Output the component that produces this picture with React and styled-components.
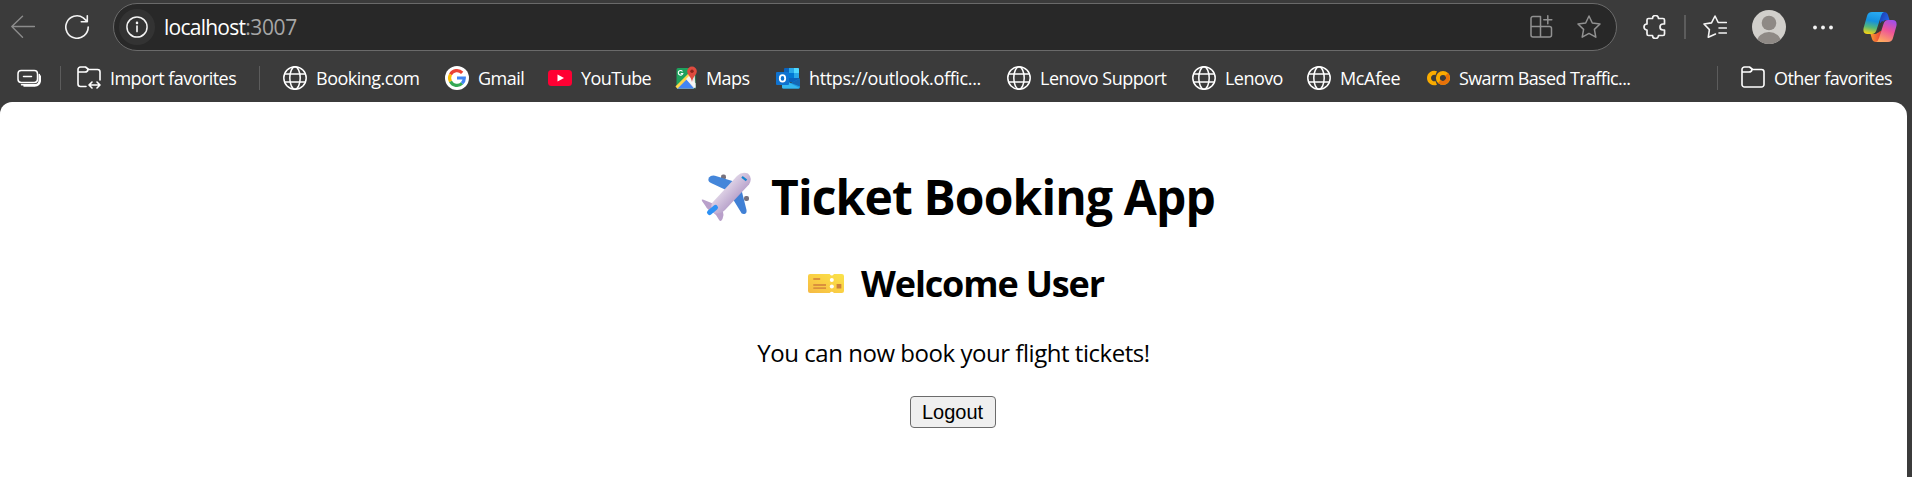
import React from "react";
import styled, { createGlobalStyle } from "styled-components";

const UI_FONT = '"Open Sans", "Noto Sans", sans-serif';

const GlobalStyle = createGlobalStyle`
  *, *::before, *::after { box-sizing: border-box; }
  html, body { margin: 0; height: 100%; background: #3b3b3b; overflow: hidden; }
  svg { display: block; flex: none; }
`;

const Browser = styled.div`
  display: flex;
  flex-direction: column;
  height: 100vh;
  background: #3b3b3b;
  color: #fff;
  font-family: ${UI_FONT};
`;

const Toolbar = styled.div`
  display: flex;
  align-items: center;
  height: 54px;
  padding: 0 15px 0 11px;
`;

const Slot = styled.span`
  display: flex;
  flex: none;
  color: ${(p) => p.$color || "#f4f4f4"};
  margin-left: ${(p) => p.$gap || 0}px;
`;

const AddressBar = styled.div`
  display: flex;
  align-items: center;
  flex: 1;
  height: 48px;
  margin-left: 24px;
  padding: 0 15px 0 5px;
  border: 1px solid #6a6a6a;
  border-radius: 24px;
  background: #282828;
`;

const InfoButton = styled.span`
  display: flex;
  align-items: center;
  justify-content: center;
  width: 36px;
  height: 36px;
  border-radius: 50%;
  background: #333;
  color: #f4f4f4;
`;

const Url = styled.span`
  flex: 1;
  margin-left: 9px;
  font-size: 21px;
  line-height: 28px;
  letter-spacing: -0.75px;
  white-space: nowrap;
`;

const Port = styled.span`
  color: #a6a6a6;
  letter-spacing: -0.4px;
`;

const Divider = styled.span`
  flex: none;
  width: ${(p) => p.$width || 1}px;
  height: 24px;
  margin-left: ${(p) => p.$gap || 0}px;
  background: #5c5c5c;
`;

const FavoritesBar = styled.div`
  display: flex;
  align-items: center;
  height: 48px;
  padding-left: 17px;
  padding-right: 20px;
`;

const Favorite = styled.span`
  display: flex;
  align-items: center;
  gap: 9px;
  flex: none;
  width: ${(p) => p.$width}px;
  margin-left: ${(p) => p.$gap || 0}px;
`;

const Label = styled.span`
  font-size: 18px;
  line-height: 24px;
  letter-spacing: ${(p) => p.$tracking}px;
  white-space: nowrap;
`;

const Spacer = styled.span`
  flex: 1;
`;

const Page = styled.main`
  display: flex;
  flex-direction: column;
  align-items: center;
  flex: 1;
  margin-right: 5px;
  padding-top: 63px;
  border-radius: 12px 14px 0 0;
  background: #fff;
  color: #000;
`;

const Title = styled.h1`
  display: flex;
  align-items: center;
  gap: 20px;
  margin: 0;
  padding-left: 9px;
  font-size: 48px;
  line-height: 64px;
  letter-spacing: -0.87px;
  white-space: nowrap;
`;

const Subtitle = styled.h2`
  display: flex;
  align-items: center;
  gap: 17px;
  margin: 31px 0 0;
  padding-left: 5px;
  font-size: 36px;
  line-height: 48px;
  letter-spacing: -1.15px;
  white-space: nowrap;
`;

const Message = styled.p`
  margin: 29px 0 0;
  font-size: 24px;
  line-height: 32px;
  letter-spacing: -0.46px;
`;

const LogoutButton = styled.button`
  width: 86px;
  height: 32px;
  margin: 27px 2px 0 0;
  padding: 0;
  border: 1px solid #6b6b6b;
  border-radius: 4px;
  background: #efefef;
  color: #000;
  font: 20px/28px "Liberation Sans", Arial, sans-serif;
`;

function Line({ size = 24, stroke = 1.6, children }) {
  return (
    <svg width={size} height={size} viewBox="0 0 24 24" fill="none" stroke="currentColor" strokeWidth={stroke} strokeLinecap="round" strokeLinejoin="round">
      {children}
    </svg>
  );
}

const BackIcon = () => <Line stroke={1.4}><path d="M23.5 11.5H.8M11.5 1.2.8 11.5l10.700 10.700" /></Line>;
const ReloadIcon = () => <Line><path d="M23.200 12A11.200 11.200 0 1 1 18.300 2.800L22.300 6.600M22.300.8v6h-6" /></Line>;
const InfoIcon = () => <Line size={22}><circle cx="12" cy="12" r="11" /><path d="M12 11v6" strokeWidth="1.8" /><circle cx="12" cy="7.500" r=".6" fill="currentColor" /></Line>;
const AppsIcon = () => <Line stroke={1.5}><path d="M11.500 11.500H2V3.500A2 2 0 0 1 4 1.500h7.500v20.500M2 11.500V20a2 2 0 0 0 2 2h16.500a2 2 0 0 0 2-2v-6.500a2 2 0 0 0-2-2h-9M18.800.8v8M14.800 4.800h8" /></Line>;
const StarIcon = () => <Line stroke={1.5}><path d="m12 1 3.300 7 7.700 1-5.600 5.400 1.400 7.800-6.800-3.800-6.800 3.800 1.400-7.800L1 9l7.700-1Z" /></Line>;
const PuzzleIcon = () => <Line stroke={1.7}><path d="M9.500 3.500a3 3 0 0 1 6 0H20a1.500 1.500 0 0 1 1.500 1.500v4h-1.500a3 3 0 0 0 0 6h1.500v4a1.500 1.500 0 0 1-1.500 1.500h-4.500a3 3 0 0 1-6 0H5.500A1.500 1.500 0 0 1 4 19v-4a3 3 0 0 1 0-6V5a1.500 1.500 0 0 1 1.500-1.500Z" /></Line>;
const FavoritesIcon = () => <Line><path d="M12.500 19 5.300 22.200l1.100-7.600L1 9l7.500-1.100L12 1l3.200 6.500H23.300M16 13h7.300M16 18h7.300" /></Line>;
const GroupIcon = () => <Line stroke={1.5}><rect x="1" y="4.500" width="19.500" height="12" rx="3.200" /><path d="M6.500 10.500h8M4.500 18.700h13.500a4.500 4.500 0 0 0 4.300-4.500V8.500M23.300 10v4.500a5.500 5.500 0 0 1-5.500 5.500H7" /></Line>;
const FolderIcon = () => <Line><path d="M1 9V3.500A2.500 2.500 0 0 1 3.500 1h5l3.200 2.500h8.800A2.500 2.500 0 0 1 23 6v12.500a2.500 2.500 0 0 1-2.500 2.500h-17A2.500 2.500 0 0 1 1 18.500V6h7a3 3 0 0 0 3-2.500" /></Line>;
const ImportIcon = () => <Line><path d="M9 20.500H3.500A2.500 2.500 0 0 1 1 18V3.500A2.500 2.500 0 0 1 3.500 1h5l3.200 2.500h8.800A2.500 2.500 0 0 1 23 6v8M1 6h7a3 3 0 0 0 3-2.500M12 19h11M15 16l-3 3 3 3M20 16l3 3-3 3" /></Line>;
const GlobeIcon = () => <Line stroke={1.5}><circle cx="12" cy="12" r="11.200" /><ellipse cx="12" cy="12" rx="5.200" ry="11.200" /><path d="M2 8h20M2 16h20" /></Line>;

const Avatar = () => (
  <svg width="34" height="34" viewBox="0 0 34 34">
    <defs><clipPath id="avatar"><circle cx="17" cy="17" r="17" /></clipPath></defs>
    <g clipPath="url(#avatar)">
      <rect width="34" height="34" fill="#d1cfcb" />
      <circle cx="17" cy="13" r="7.300" fill="#8e8985" />
      <ellipse cx="17" cy="32" rx="12" ry="10" fill="#8e8985" />
    </g>
  </svg>
);

const MoreIcon = () => (
  <svg width="20" height="6" viewBox="0 0 20 6" fill="currentColor">
    <circle cx="2" cy="3.500" r="1.900" /><circle cx="10" cy="3.500" r="1.900" /><circle cx="18" cy="3.500" r="1.900" />
  </svg>
);

const CopilotIcon = () => (
  <svg width="34" height="32" viewBox="0 0 34 32">
    <defs>
      <linearGradient id="cpA" x1=".5" y1="0" x2=".3" y2="1"><stop stopColor="#27a9f2" /><stop offset=".4" stopColor="#1490df" /><stop offset=".7" stopColor="#55b879" /><stop offset="1" stopColor="#f4d315" /></linearGradient>
      <linearGradient id="cpB" x1=".7" y1="0" x2=".3" y2="1"><stop stopColor="#a24fe8" /><stop offset=".45" stopColor="#ee5499" /><stop offset="1" stopColor="#ffac5e" /></linearGradient>
      <linearGradient id="cpC" x1="0" y1="0" x2="1" y2=".6"><stop stopColor="#1a3dae" /><stop offset="1" stopColor="#2463e8" /></linearGradient>
      <linearGradient id="cpD"><stop stopColor="#f89a33" /><stop offset="1" stopColor="#e94136" /></linearGradient>
    </defs>
    <path d="M17 1h4q3 0 4 3l1.500 5H23q-2 0-3 2l-3 1Z" fill="url(#cpC)" />
    <path d="M17 31h-4q-3 0-4-3l-1.500-5H12q2 0 3-2l3-1Z" fill="url(#cpD)" />
    <path d="M9 1h12q-2 .5-3 4l-4.500 14q-1.200 4-4.500 4H4.500Q-.5 23 .6 17L4 5Q5 1 9 1Z" fill="url(#cpA)" />
    <path d="M25 31H13q2-.5 3-4l4.500-14Q21.700 9 25 9h4.500q5 0 3.900 6L30 27q-1 4-5 4Z" fill="url(#cpB)" />
    <path d="m18.500 10.500 2-.5q-1.200 1.200-1.800 3l-2.300 7.500q-.6 1.200-2.400 1.500Z" fill="#363636" />
  </svg>
);

const GoogleIcon = () => (
  <svg width="24" height="24" viewBox="0 0 24 24" fill="none" strokeWidth="3.200">
    <circle cx="12" cy="12" r="12" fill="#fff" />
    <path d="M5.500 8.500A7.300 7.300 0 0 1 17.200 6.800" stroke="#ea4335" />
    <path d="M5.500 15.500A7.300 7.300 0 0 1 5.500 8.500" stroke="#fbbc05" />
    <path d="M17 17.400A7.300 7.300 0 0 1 5.500 15.500" stroke="#34a853" />
    <path d="M12 12h7.300A7.300 7.300 0 0 1 17 17.400" stroke="#4285f4" />
  </svg>
);

const YouTubeIcon = () => (
  <svg width="24" height="24" viewBox="0 0 24 24"><rect y="4" width="24" height="16" rx="3.500" fill="#ff0033" /><path d="m9.500 8.500 6.500 3.500-6.500 3.500Z" fill="#fff" /></svg>
);

const MapsIcon = () => (
  <svg width="24" height="24" viewBox="0 0 24 24">
    <rect x="3.500" y="2" width="19" height="20.500" rx="1.500" fill="#1fa15d" />
    <path d="m3.500 20 18-14 1 15-2 1.500H4Z" fill="#e4e4e1" />
    <path d="M4 22.500 13 13l8 9.500Z" fill="#4285f4" />
    <path d="M3.500 21.500 18 7" stroke="#ffd64b" strokeWidth="3" />
    <path d="m13 13 9.500 9.500v-5L16 10Z" fill="#f5f5f5" />
    <path d="M9.500 5.500A2.300 2.300 0 1 0 9.800 7.500H7.800" fill="none" stroke="#fff" strokeWidth="1.100" />
    <path d="M19 .5a4.800 4.800 0 0 0-4.800 4.800C14.200 9 18 10 19 16c1-6 4.800-7 4.800-10.700A4.800 4.800 0 0 0 19 .5Z" fill="#df4b3f" />
    <circle cx="19" cy="5.300" r="1.700" fill="#8c241d" />
  </svg>
);

const OutlookIcon = () => (
  <svg width="24" height="24" viewBox="0 0 24 24">
    <rect x="8" y="2" width="15" height="14" rx="1" fill="#0a63bd" />
    <path d="M13 2h5v5h-5ZM18 7h5v5h-5Z" fill="#28a8ea" />
    <path d="M18 2h4a1 1 0 0 1 1 1v4h-5Z" fill="#50d9ff" />
    <path d="M13 7h5v5h-5Z" fill="#0078d4" />
    <path d="M6 12.500 15 17l9-4.500V21a1.500 1.500 0 0 1-1.500 1.500h-15A1.500 1.500 0 0 1 6 21Z" fill="#1e9ce3" />
    <path d="m6 13 17.500 9-1 .5h-15A1.500 1.500 0 0 1 6 21Z" fill="#35b8f1" />
    <path d="m15 17 9-4.500v8Z" fill="#1467b5" />
    <rect y="6" width="13" height="13" rx="1" fill="#0f72cf" />
    <ellipse cx="6.500" cy="12.400" rx="2.700" ry="3.200" fill="none" stroke="#fff" strokeWidth="1.800" />
  </svg>
);

const ColabIcon = () => (
  <svg width="24" height="24" viewBox="0 0 24 24" fill="none" strokeWidth="4">
    <path d="M10.200 7.200a5.200 5.200 0 1 0 0 9.600" stroke="#f9ab00" />
    <circle cx="17" cy="12" r="5.100" stroke="#f9ab00" />
    <path d="M20.600 8.400a5.100 5.100 0 0 1-7.200 7.200" stroke="#e8710a" />
  </svg>
);

const PlaneIcon = () => (
  <svg width="50" height="50" viewBox="0 0 50 50">
    <defs>
      <linearGradient id="body" x1=".35" y1=".35" x2=".65" y2=".65"><stop stopColor="#dfd3e6" /><stop offset="1" stopColor="#b8a2cb" /></linearGradient>
    </defs>
    <rect x="20" y="2.500" width="5" height="5" rx="2" fill="#77717c" />
    <rect x="43" y="24" width="5" height="5" rx="2" fill="#77717c" />
    <path d="M33 9.500 14 3.800Q10 3 8 5.500q-2 3.500 2 5.500l15 7Z" fill="#4486da" />
    <path d="m40 16 5.500 22q.5 3.500-2 4-3 .5-4-2.500L30 24Z" fill="#4080d5" />
    <path d="M1 29q-1-2 1.500-1.200L13 32l9 8 .5 3q-.5 4-2.500 6-1.500.5-2.500-2-1.500-4-6-7-5-2-7-6Z" fill="#b9a0ca" />
    <path d="M11 31 36 4q5-5 11-2.500 5 4.500 1 11L24 38q-5 5-11 3-4-4-2-10Z" fill="url(#body)" />
    <path d="m8.500 40.500 6-5" stroke="#2d91f4" strokeWidth="5" strokeLinecap="round" />
    <path d="m41 4.800 4.500 3.500" stroke="#1684cf" strokeWidth="2.200" />
  </svg>
);

const TicketIcon = () => (
  <svg width="36" height="20" viewBox="0 0 34 20" preserveAspectRatio="none">
    <defs><linearGradient id="ticket" x1="0" y1="1" x2="1" y2="0"><stop stopColor="#f5b944" /><stop offset=".5" stopColor="#fad044" /><stop offset="1" stopColor="#fae34b" /></linearGradient></defs>
    <path d="M2 0h18.500q2 3 4 0H32q2 0 2 2v15q0 2-2 2h-7.500q-2-2.500-4 0H2q-2 0-2-2V2Q0 0 2 0Z" fill="url(#ticket)" />
    <circle cx="22.500" cy="6" r="1.900" fill="#fff" /><circle cx="22.500" cy="12.500" r="1.900" fill="#fff" />
    <path d="M5 5h6.500M5 11h12M5 14.200h12" stroke="#da913d" strokeWidth="1.800" />
    <rect x="27" y="10" width="4.500" height="4.500" fill="#ce813b" />
  </svg>
);

const favorites = [
  { label: "Booking.com", Icon: GlobeIcon, width: 162, tracking: -0.5 },
  { label: "Gmail", Icon: GoogleIcon, width: 103, tracking: -0.5 },
  { label: "YouTube", Icon: YouTubeIcon, width: 125, tracking: -0.55 },
  { label: "Maps", Icon: MapsIcon, width: 103, tracking: -0.6 },
  { label: "https://outlook.offic...", Icon: OutlookIcon, width: 231, tracking: -0.35 },
  { label: "Lenovo Support", Icon: GlobeIcon, width: 185, tracking: -0.5 },
  { label: "Lenovo", Icon: GlobeIcon, width: 115, tracking: -0.55 },
  { label: "McAfee", Icon: GlobeIcon, width: 119, tracking: -0.35 },
  { label: "Swarm Based Traffic...", Icon: ColabIcon, width: 220, tracking: -0.63 },
];

export default function App() {
  return (
    <>
      <GlobalStyle />
      <Browser>
        <Toolbar>
          <Slot $color="#8c8c8c"><BackIcon /></Slot>
          <Slot $gap={30}><ReloadIcon /></Slot>
          <AddressBar>
            <InfoButton><InfoIcon /></InfoButton>
            <Url>localhost<Port>:3007</Port></Url>
            <Slot $color="#919191"><AppsIcon /></Slot>
            <Slot $color="#919191" $gap={24}><StarIcon /></Slot>
          </AddressBar>
          <Slot $gap={26}><PuzzleIcon /></Slot>
          <Divider $gap={17} $width={2} />
          <Slot $gap={17}><FavoritesIcon /></Slot>
          <Slot $gap={25}><Avatar /></Slot>
          <Slot $gap={27}><MoreIcon /></Slot>
          <Slot $gap={30}><CopilotIcon /></Slot>
        </Toolbar>
        <FavoritesBar>
          <GroupIcon />
          <Divider $gap={19} />
          <Favorite $gap={16} $width={182}><ImportIcon /><Label $tracking={-0.54}>Import favorites</Label></Favorite>
          <Divider />
          {favorites.map(({ label, Icon, width, tracking }, i) => (
            <Favorite key={label} $width={width} $gap={i === 0 ? 23 : 0}><Icon /><Label $tracking={tracking}>{label}</Label></Favorite>
          ))}
          <Spacer />
          <Divider />
          <Favorite $gap={23} $width={151}><FolderIcon /><Label $tracking={-0.57}>Other favorites</Label></Favorite>
        </FavoritesBar>
        <Page>
          <Title><PlaneIcon /><span>Ticket Booking App</span></Title>
          <Subtitle><TicketIcon /><span>Welcome User</span></Subtitle>
          <Message>You can now book your flight tickets!</Message>
          <LogoutButton type="button">Logout</LogoutButton>
        </Page>
      </Browser>
    </>
  );
}
